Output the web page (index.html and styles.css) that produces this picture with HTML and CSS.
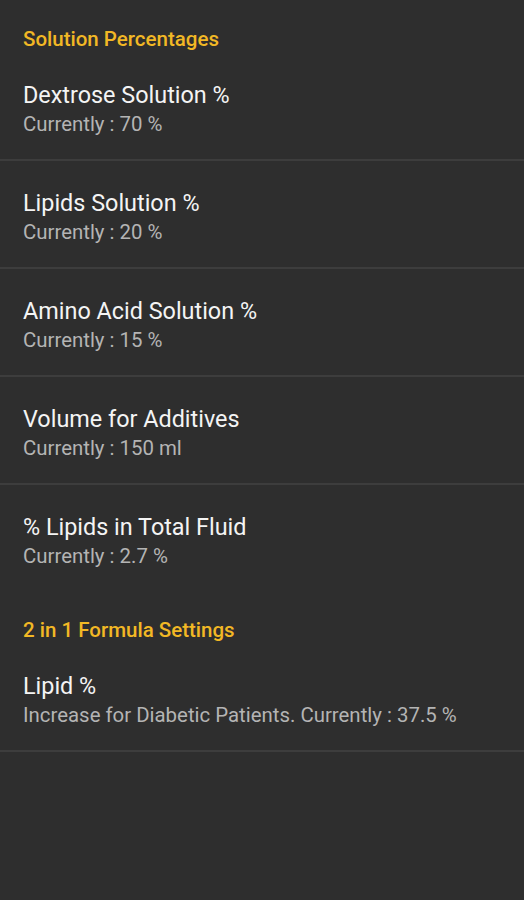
FILE: index.html
```html
<!DOCTYPE html>
<html>
<head>
<meta charset="utf-8">
<link rel="stylesheet" href="styles.css">
</head>
<body>
<div class="screen">
  <section class="group">
    <h2 class="group-title">Solution Percentages</h2>
    <div class="pref">
      <div class="pref-title">Dextrose Solution %</div>
      <div class="pref-summary">Currently : 70 %</div>
    </div>
    <div class="pref">
      <div class="pref-title">Lipids Solution %</div>
      <div class="pref-summary">Currently : 20 %</div>
    </div>
    <div class="pref">
      <div class="pref-title">Amino Acid Solution %</div>
      <div class="pref-summary">Currently : 15 %</div>
    </div>
    <div class="pref">
      <div class="pref-title">Volume for Additives</div>
      <div class="pref-summary">Currently : 150 ml</div>
    </div>
    <div class="pref last">
      <div class="pref-title">% Lipids in Total Fluid</div>
      <div class="pref-summary">Currently : 2.7 %</div>
    </div>
  </section>
  <section class="group">
    <h2 class="group-title">2 in 1 Formula Settings</h2>
    <div class="pref">
      <div class="pref-title">Lipid %</div>
      <div class="pref-summary">Increase for Diabetic Patients. Currently : 37.5 %</div>
    </div>
  </section>
</div>
</body>
</html>
```

FILE: styles.css
```css
html, body {
  margin: 0;
  padding: 0;
  background: #2e2e2e;
}
body {
  font-family: Roboto, "Liberation Sans", sans-serif;
  min-height: 900px;
}
.screen {
  display: flex;
  flex-direction: column;
}
.group-title {
  margin: 0;
  padding: 27px 23px 2px;
  font-size: 20.5px;
  line-height: 24px;
  font-weight: 500;
  color: #f2b825;
}
.pref {
  padding: 28px 23px 23px;
  border-bottom: 2px solid #3d3d3d;
  display: flex;
  flex-direction: column;
  gap: 3px;
}
.pref.last {
  border-bottom: none;
  padding-bottom: 23px;
}
.pref-title {
  font-size: 23.4px;
  line-height: 28px;
  color: #f4f4f4;
}
.pref-summary {
  font-size: 20.4px;
  line-height: 24px;
  color: #b4b4b4;
}
```
